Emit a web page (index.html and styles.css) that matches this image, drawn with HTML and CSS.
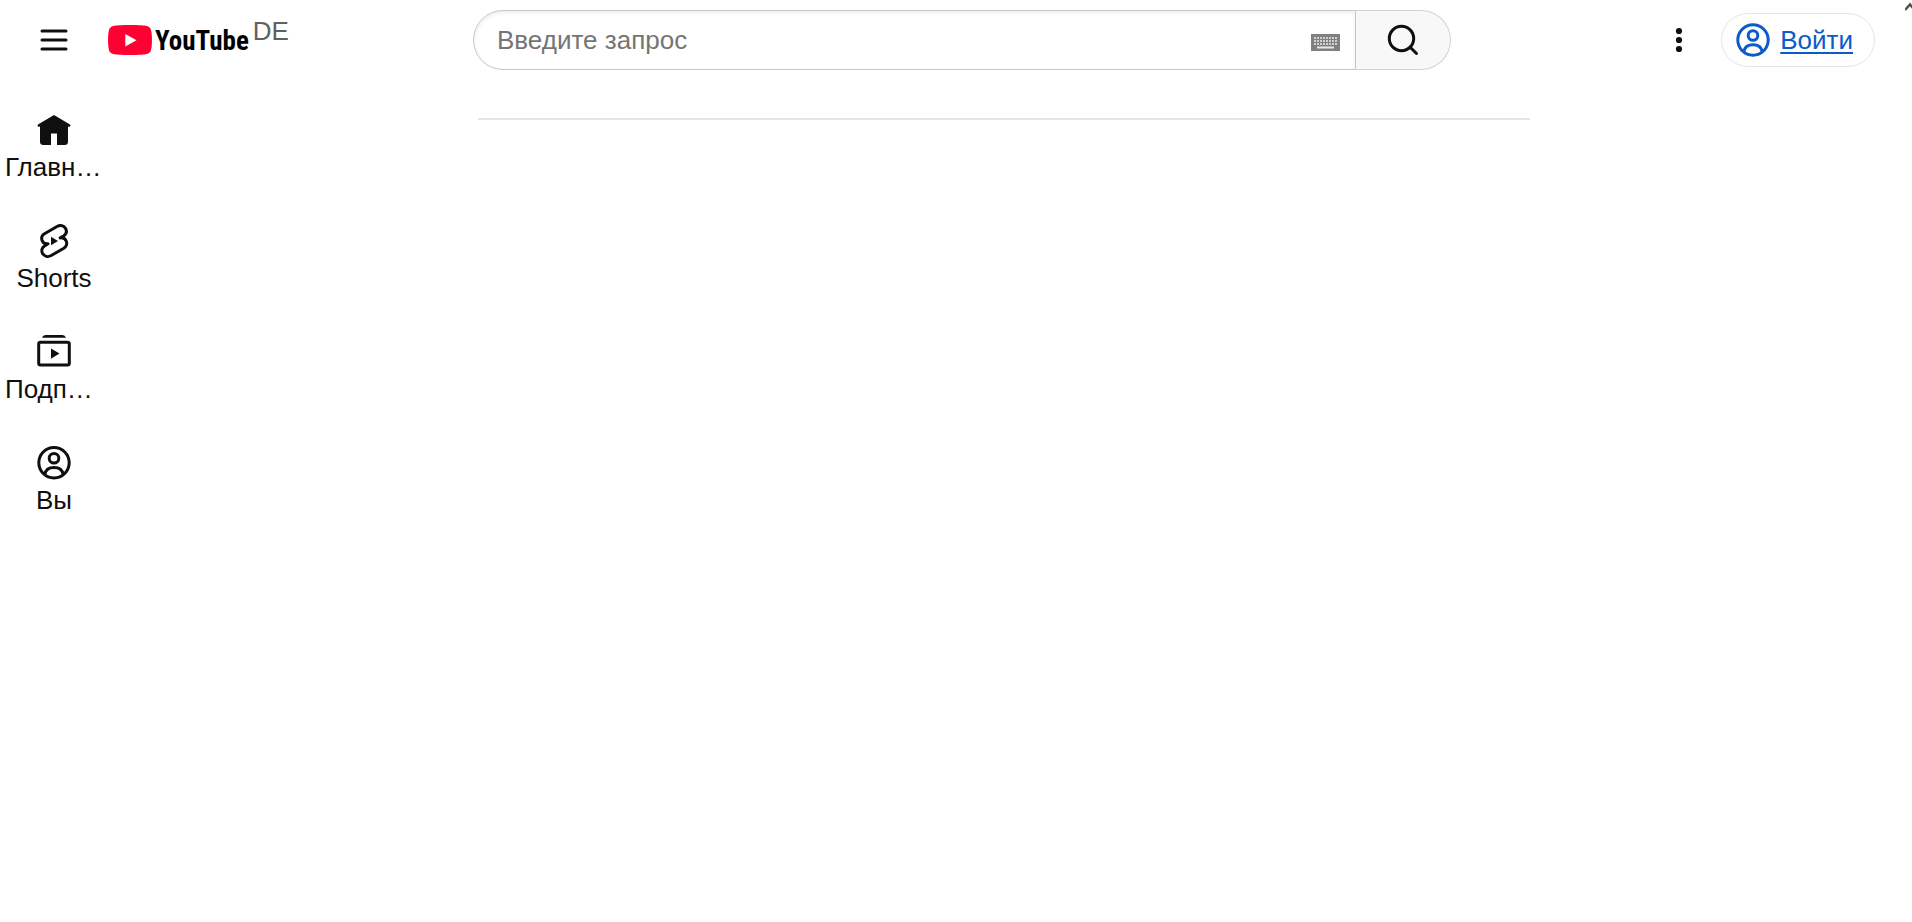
FILE: index.html
```html
<!DOCTYPE html>
<html lang="ru">
<head>
<meta charset="utf-8">
<title>YouTube</title>
<link rel="stylesheet" href="styles.css">
</head>
<body>
<header class="masthead">
  <div class="start">
    <button class="icon-button" type="button" aria-label="Меню">
      <svg width="32" height="32" viewBox="0 0 32 32"><path d="M4 7h24M4 16h24M4 25h24" fill="none" stroke="#0f0f0f" stroke-width="3" stroke-linecap="round"/></svg>
    </button>
    <a class="logo" href="#" aria-label="YouTube">
      <svg width="44" height="30" viewBox="0 0 44 30"><path d="M22 0C31 0 36 .4 38.800 1C41 1.500 42.400 3 43 5C44.300 10 44.300 20 43 25C42.400 27 41 28.500 38.800 29C36 29.600 31 30 22 30S8 29.600 5.200 29C3 28.500 1.600 27 1 25C-.3 20-.3 10 1 5C1.600 3 3 1.500 5.200 1C8 .4 13 0 22 0Z" fill="#ff0033"/><path d="M17.300 9v12.500L28.500 15.200Z" fill="#fff"/></svg>
      <span class="wordmark">YouTube</span>
    </a>
    <span class="country">DE</span>
  </div>
  <form class="search">
    <div class="field">
      <input class="query" type="text" placeholder="Введите запрос" aria-label="Введите запрос">
      <button class="keyboard" type="button" aria-label="Клавиатура">
        <svg width="29" height="17" viewBox="0 0 29 17"><path d="M0 0h29v17H0z" fill="#808080"/><path d="M3 4h23M3 7h23M3 10h23" stroke="#d0d0d0" stroke-width="2" stroke-dasharray="2 1"/><path d="M6 13.500h17" stroke="#e8e8e8" stroke-width="2"/></svg>
      </button>
    </div>
    <button class="submit" type="submit" aria-label="Поиск">
      <svg width="32" height="32" viewBox="0 0 32 32"><g fill="none" stroke="#0f0f0f" stroke-width="3" stroke-linecap="round"><circle cx="14.500" cy="14.500" r="12.200"/><path d="M23.200 23.200L29.500 29.500"/></g></svg>
    </button>
  </form>
  <div class="end">
    <button class="icon-button" type="button" aria-label="Настройки">
      <svg width="32" height="32" viewBox="0 0 32 32" fill="#0f0f0f"><circle cx="16" cy="7" r="3.100"/><circle cx="16" cy="16" r="3.100"/><circle cx="16" cy="25" r="3.100"/></svg>
    </button>
    <a class="sign-in" href="#">
      <svg width="34" height="34" viewBox="0 0 34 34" fill="none" stroke="currentColor" stroke-width="3"><circle cx="17" cy="17" r="15.200"/><circle cx="17" cy="12.500" r="4.800"/><path d="M7.800 29C8.500 24 12 21.800 17 21.800S25.500 24 26.200 29"/></svg>
      <span class="sign-in-text">Войти</span>
    </a>
  </div>
</header>
<svg class="scroll-up" width="7" height="10" viewBox="0 0 7 10" aria-hidden="true"><path d="M0 8L5 2.500L8 6" fill="none" stroke="#505050" stroke-width="2.500"/></svg>
<div class="page">
  <nav class="guide">
    <a class="entry" href="#">
      <svg width="34" height="34" viewBox="0 0 34 34"><path d="M17 2L33 11.500Q34 12.500 33 13.500Q32.400 14 31 13.500V29Q31 32 27.500 32H20V20.500H14V32H6.500Q3 32 3 29V13.500Q1.600 14 1 13.500Q0 12.500 1 11.500Z" fill="#0f0f0f"/></svg>
      <span class="label">Главная</span>
    </a>
    <a class="entry" href="#">
      <svg width="34" height="34" viewBox="0 0 34 34"><path d="M11 19.800C8 20.200 5.800 18.500 5 16.200C4.200 13.600 5 11.200 7.500 9.800L20 2.500C23.500.6 27 1.600 28.600 4.500C30.200 7.600 29 10.400 26.500 12L23.200 13.900C26.400 13.400 28.600 15 29.400 17.500C30.200 20.200 29.200 22.700 26.800 24.200L14.200 31.500C10.800 33.400 7.200 32.300 5.600 29.500C4 26.400 5.100 23.500 7.500 22Z" fill="none" stroke="#0f0f0f" stroke-width="3" stroke-linejoin="round"/><path d="M14 12.800V21.200L21 17Z" fill="#0f0f0f"/></svg>
      <span class="label">Shorts</span>
    </a>
    <a class="entry" href="#">
      <svg width="34" height="34" viewBox="0 0 34 34"><path d="M5 2.800Q6 0 8.500 0H25.500Q28 0 29 2.800Z" fill="#0f0f0f"/><rect x="1.700" y="7.200" width="30.600" height="22.800" rx="1.800" fill="none" stroke="#0f0f0f" stroke-width="3"/><path d="M14 13.500V23.800L22.500 18.600Z" fill="#0f0f0f"/></svg>
      <span class="label">Подписки</span>
    </a>
    <a class="entry" href="#">
      <svg width="34" height="34" viewBox="0 0 34 34" fill="none" stroke="#0f0f0f" stroke-width="3"><circle cx="17" cy="16.700" r="15.200"/><circle cx="17" cy="12.200" r="4.800"/><path d="M7.800 28.700C8.500 23.700 12 21.500 17 21.500S25.500 23.700 26.200 28.700"/></svg>
      <span class="label">Вы</span>
    </a>
  </nav>
  <main class="content"><hr class="divider"></main>
</div>
</body>
</html>
```
FILE: styles.css
```css
* { box-sizing: border-box; }
body {
  margin: 0;
  background: #fff;
  color: #0f0f0f;
  font: 26px/30px "Liberation Sans", Arial, sans-serif;
}
svg { display: block; flex: none; }
button { border: 0; padding: 0; background: none; font: inherit; }
.masthead {
  display: flex;
  align-items: center;
  justify-content: space-between;
  height: 80px;
  padding: 0 37px 0 30px;
}
.start { display: flex; align-items: center; min-width: 259px; }
.icon-button {
  display: flex;
  align-items: center;
  justify-content: center;
  width: 48px;
  height: 48px;
}
.logo {
  display: flex;
  align-items: center;
  gap: 3px;
  margin-left: 30px;
  color: #000;
  text-decoration: none;
}
.wordmark {
  padding-top: 2px;
  font-family: "Roboto Condensed", "Open Sans Condensed", "Liberation Sans Narrow", Roboto, sans-serif;
  font-size: 27px;
  font-weight: 700;
}
.country { align-self: flex-start; margin-left: 4px; color: #606060; }
.search { display: flex; flex: 0 1 978px; height: 60px; }
.field {
  display: flex;
  flex: 1;
  align-items: center;
  min-width: 0;
  padding: 0 15px 0 23px;
  border: 1px solid #c6c6c6;
  border-radius: 30px 0 0 30px;
  box-shadow: inset 0 2px 4px #eee;
}
.query {
  flex: 1;
  min-width: 0;
  padding: 0;
  border: 0;
  outline: 0;
  background: transparent;
  color: #0f0f0f;
  font: inherit;
}
.query::placeholder { color: #757575; }
.keyboard { padding-top: 4px; }
.submit {
  display: flex;
  align-items: center;
  justify-content: center;
  width: 95px;
  border: 1px solid #d3d3d3;
  border-left: 0;
  border-radius: 0 30px 30px 0;
  background: #f8f8f8;
}
.end {
  display: flex;
  align-items: center;
  justify-content: flex-end;
  gap: 18px;
  min-width: 240px;
}
.sign-in {
  display: flex;
  align-items: center;
  gap: 10px;
  height: 54px;
  padding: 0 21px 0 14px;
  border: 1px solid #e5e5e5;
  border-radius: 27px;
  color: #0b5bcb;
  text-decoration: none;
}
.sign-in-text {
  text-decoration: underline;
  text-decoration-thickness: 2px;
  text-underline-offset: 3px;
}
.scroll-up { position: absolute; top: 2px; right: 0; }
.page { display: flex; }
.guide {
  display: flex;
  flex-direction: column;
  gap: 42px;
  width: 108px;
  padding: 33px 5px;
}
.entry {
  display: flex;
  flex-direction: column;
  align-items: center;
  gap: 5px;
  color: #0f0f0f;
  text-decoration: none;
}
.label {
  max-width: 100%;
  overflow: hidden;
  text-overflow: ellipsis;
  white-space: nowrap;
}
.content { flex: 1; padding: 38px 382px 0 370px; }
.divider { height: 2px; margin: 0; border: 0; background: #e5e5e5; }
```
